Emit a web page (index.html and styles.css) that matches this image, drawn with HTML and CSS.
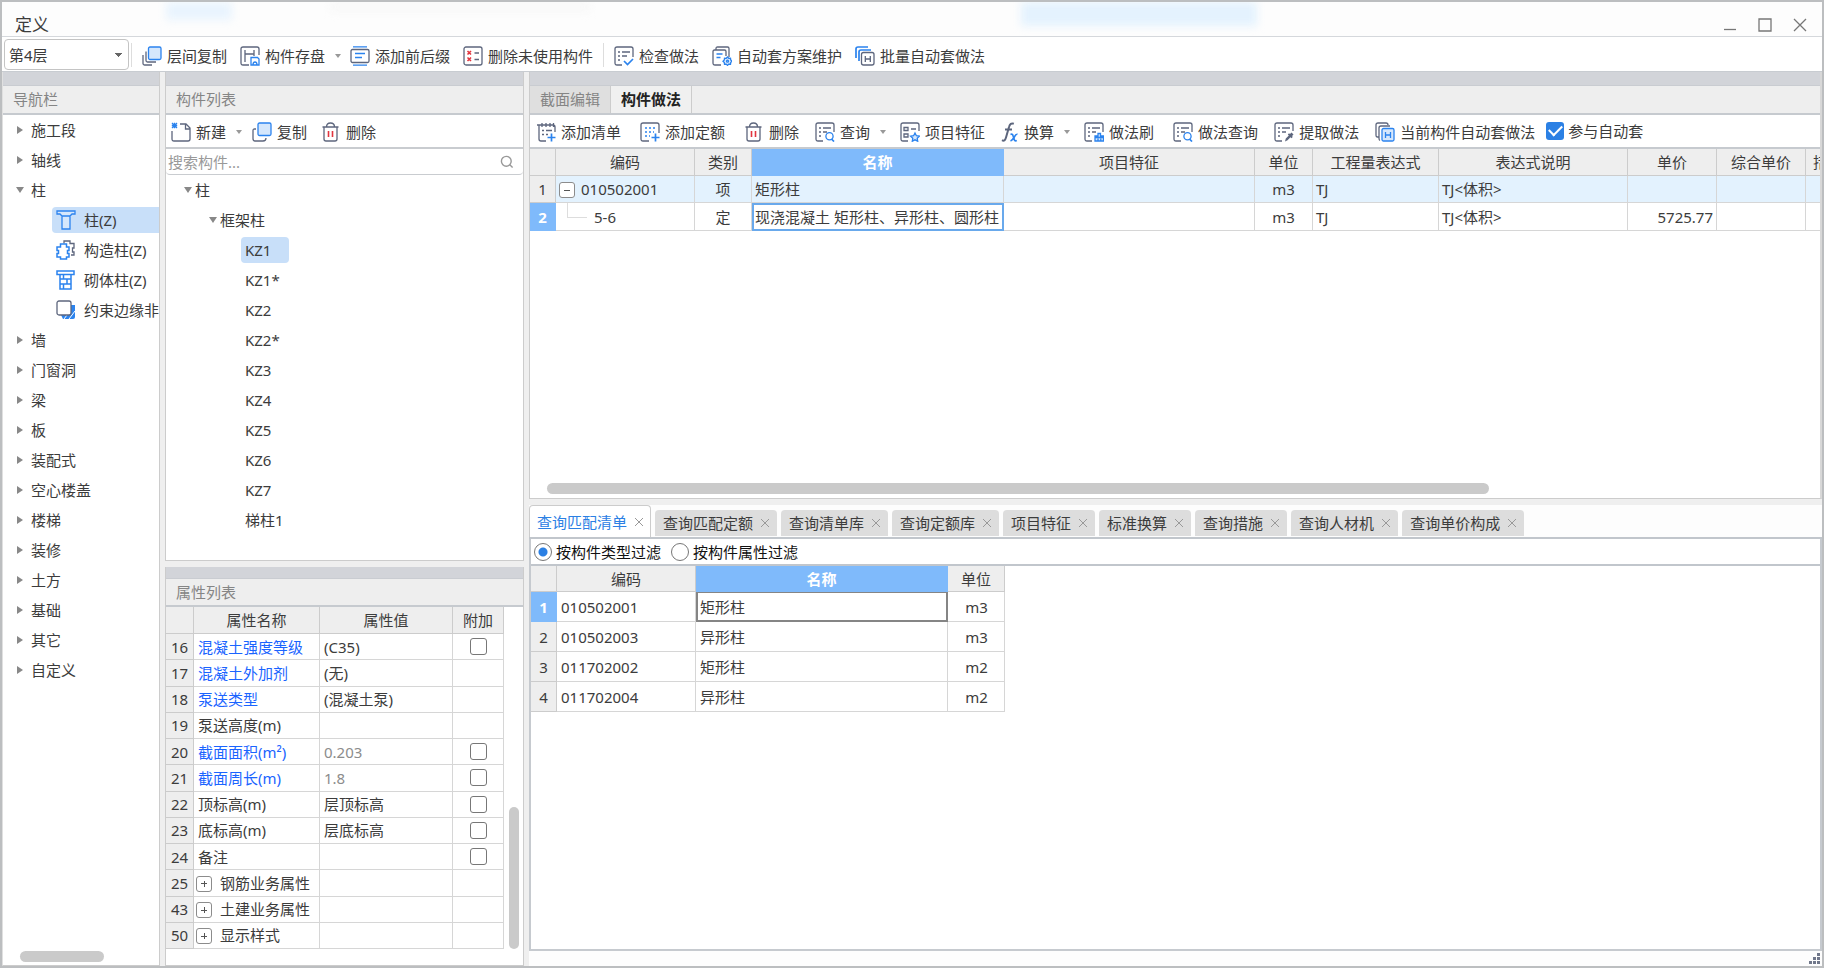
FILE: index.html
```
<!DOCTYPE html>
<html lang="zh-CN">
<head>
<meta charset="utf-8">
<title>定义</title>
<link rel="stylesheet" href="styles.css">
</head>
<body>
<svg class="sprite" aria-hidden="true">
  <symbol id="i-layercopy" viewBox="0 0 20 20"><path class="d" d="M1 9v8.500q0 1.500 1.500 1.500H10M4 5.500v9q0 1.500 1.500 1.500H14"/><rect class="bf" x="6.500" y="1" width="12.500" height="12.500" rx="1.500"/></symbol>
  <symbol id="i-save" viewBox="0 0 20 20"><path class="d" d="M9 19H3q-2 0-2-2V3q0-2 2-2h14q2 0 2 2v6M5 4v12M5 8h9M14 4v6"/><path class="b" d="M11 11.500h6.500l1.500 1.500v6h-8zM13 19q0-3 2-3t2 3"/></symbol>
  <symbol id="i-affix" viewBox="0 0 20 20"><rect class="d" x="1" y="3.500" width="18" height="13" rx="1.500"/><path class="b" d="M3 .8h14M3 19.200h14M5 7.500h10M5 11.500h7"/></symbol>
  <symbol id="i-delunused" viewBox="0 0 20 20"><rect class="d" x="1" y="1" width="18" height="18" rx="2"/><path class="d" d="M11.500 7h4.500M11.500 13.500h4.500"/><path class="r" d="M4.500 5l3.500 3.500M8 5L4.500 8.500M4.500 11.500L8 15M8 11.500L4.500 15"/></symbol>
  <symbol id="i-check" viewBox="0 0 20 20"><path class="d" d="M8 19H3q-2 0-2-2V3q0-2 2-2h14q2 0 2 2v8M4 6h2M8 6h8M4 10h2M8 10h5M4 14h2"/><path class="b2" d="M10 15l3.500 3.500L19 13"/></symbol>
  <symbol id="i-plan" viewBox="0 0 20 20"><path class="d" d="M4 4V2.500Q4 1 5.500 1h10q1.500 0 1.500 1.500V11M9 19H3q-2 0-2-2V5.500Q1 4 2.500 4h10Q14 4 14 5.500V10"/><path class="b" d="M4.500 8h6M4.500 11.500h4"/><path class="bf" d="M15.500 11l1.200 1.300 1.800-.1.200 1.800 1.300 1.200-1.300 1.300-.2 1.700-1.800-.1-1.200 1.300-1.300-1.300-1.700.1-.2-1.700-1.300-1.300 1.300-1.200.2-1.800 1.700.1z"/><circle class="b" cx="15.500" cy="15.200" r="1"/></symbol>
  <symbol id="i-batch" viewBox="0 0 20 20"><path class="b2" d="M1 12V3q0-2 2-2h10M4 15V6q0-2 2-2h10"/><rect class="dw" x="6.500" y="6.500" width="12.500" height="12.500" rx="2"/><path class="d" d="M10.300 10v6M15.300 10v6M10.300 13h5"/></symbol>
  <symbol id="i-new" viewBox="0 0 20 20"><path class="d" d="M9 2h6l4 4v11q0 2-2 2H3q-2 0-2-2V9M14.500 2v5H19"/><path class="b" d="M1 1l5 5M6 1L1 6M3.500 .8v5.400M.8 3.500h5.400"/></symbol>
  <symbol id="i-copy" viewBox="0 0 20 20"><path class="d" d="M4 7H2.500Q1 7 1 8.500v8Q1 19 3 19h8q3 0 3-3"/><rect class="bf" x="6" y="1" width="13" height="12.500" rx="1.500"/></symbol>
  <symbol id="i-trash" viewBox="0 0 20 20"><path class="d" d="M1.500 5h16M3 5v12q0 2 2 2h9q2 0 2-2V5M5.500 5q0-4 4-4t4 4"/><path class="r" d="M7.500 9v6M11.500 9v6"/></symbol>
  <symbol id="i-addlist" viewBox="0 0 20 20"><path class="d" d="M10 19H5q-2 0-2-2V3h-2M3 3h14q2 0 2 2v5M6 1v4M10 1v4M14 1v4M17.500 1v4M6 8.500h2M10 8.500h6M6 12.500h2M10 12.500h2"/><path class="b2" d="M15.500 11.500v8M11.500 15.500h8"/></symbol>
  <symbol id="i-addquota" viewBox="0 0 20 20"><path class="d" d="M9 19H3q-2 0-2-2V3q0-2 2-2h14q2 0 2 2v8"/><path class="bd" d="M5 6h12M5 10h9M5 14h5"/><path class="b2" d="M15.500 11.500v8M11.500 15.500h8"/></symbol>
  <symbol id="i-query" viewBox="0 0 20 20"><path class="d" d="M8 19H3q-2 0-2-2V3q0-2 2-2h14q2 0 2 2v7M4 6h2M8 6h8M4 10h2M8 10h4M4 14h2"/><circle class="b" cx="14.500" cy="14.200" r="3.600"/><path class="b2" d="M16.500 17l2.500 2.500"/></symbol>
  <symbol id="i-feature" viewBox="0 0 20 20"><path class="d" d="M8 19H3q-2 0-2-2V3q0-2 2-2h14q2 0 2 2v6M4 5.500h4v3H4zM4 12h4v3H4zM11 7h5"/><path class="bf" d="M15 11l1.400 2.700 3 .4-2.200 2.100.5 3-2.700-1.400-2.700 1.400.5-3-2.200-2.100 3-.4z"/></symbol>
  <symbol id="i-fx" viewBox="0 0 18 20"><path class="d3" d="M1 18.200q2.800 1.600 4-2.700L8 5q1.200-4.600 4.800-3.200M4 7.500h7"/><path class="b2" d="M9.500 12.500q2-1 2.500 1l1.300 4q.5 2 2.500 1M16.500 12.300q-1.500-.5-3.200 2.700t-3.800 4"/></symbol>
  <symbol id="i-brush" viewBox="0 0 20 20"><path class="d" d="M8 19H3q-2 0-2-2V3q0-2 2-2h14q2 0 2 2v7M4 6h2M8 6h8M4 10h2M8 10h4M4 14h2"/><path class="bf" d="M11 19v-5h3v-2.500h2.500V14h3v5zM14 19v-2.500M16.800 19v-2.500M11 15.500h8"/></symbol>
  <symbol id="i-extract" viewBox="0 0 20 20"><path class="d" d="M8 19H3q-2 0-2-2V3q0-2 2-2h14q2 0 2 2v6M4 6h2M8 6h8M4 10h2M8 10h4M4 14h2"/><path class="df" d="M11 19.500l.8-3 3-3-1-1 1.200-1.200 1 .6 1.500-1.400 2 2-1.400 1.500.6 1-1.200 1.200-1-1-3 3z"/></symbol>
  <symbol id="i-current" viewBox="0 0 20 20"><path class="d" d="M3.500 15H2.500Q1 15 1 13V3q0-2 2-2h8q2 0 2 2M5 18.500q-1-.5-1-2V6q0-2 2-2h9"/><rect class="bf" x="7" y="6.500" width="12" height="12.500" rx="1.500"/><path class="b" d="M10.500 10v6M15.500 10v6M10.500 13h5"/></symbol>
  <symbol id="i-search" viewBox="0 0 20 20"><circle class="g" cx="9" cy="9" r="7"/><path class="g" d="M14 14l4 4"/></symbol>
  <symbol id="i-col" viewBox="0 0 20 20"><path class="bf" d="M1 1h18v3h-3l-2 2H6L4 4H1zM6 6h8v13H6z"/></symbol>
  <symbol id="i-gz" viewBox="0 0 20 20"><path class="d" d="M8 3.500V1h6v2.500h4V8h-1.500v4H18v3h-3"/><path class="bw" d="M4.500 4h6v3H13v3.500h-1.500v3H13V17h-2.500v2h-6v-2H1v-3.500h1.500v-3H1V7h3.500z"/></symbol>
  <symbol id="i-qt" viewBox="0 0 20 20"><path class="bw" d="M1 1h17v3.500H1zM4 4.500h11V19H4zM4 9h11M4 14h11M7.500 4.500V9M11 9v5M7.500 14v5"/></symbol>
  <symbol id="i-ys" viewBox="0 0 20 20"><path class="bb" d="M5 15h10V5h4v12q0 2-2 2H7z"/><path class="w" d="M8 19l3-4M13 19l6-8"/><rect class="dw" x="1" y="1" width="14" height="14" rx="2"/></symbol>
</svg>

<div class="window">
  <header class="titlebar">
    <span class="haze haze-a"></span><span class="haze haze-b"></span><span class="haze haze-c"></span>
    <h1>定义</h1>
    <div class="controls">
      <button type="button" aria-label="最小化"><svg viewBox="0 0 14 14"><path d="M1 11.500h12"/></svg></button>
      <button type="button" aria-label="最大化"><svg viewBox="0 0 14 14"><path d="M1 1h12v12H1z"/></svg></button>
      <button type="button" aria-label="关闭"><svg viewBox="0 0 14 14"><path d="M1 1l12 12M13 1L1 13"/></svg></button>
    </div>
  </header>

  <div class="toolbar main-bar">
    <select class="floor" aria-label="楼层"><option>第4层</option></select>
    <i class="sep"></i>
    <button type="button" class="tool"><svg><use href="#i-layercopy"/></svg>层间复制</button>
    <button type="button" class="tool drop"><svg><use href="#i-save"/></svg>构件存盘</button>
    <button type="button" class="tool"><svg><use href="#i-affix"/></svg>添加前后缀</button>
    <button type="button" class="tool"><svg><use href="#i-delunused"/></svg>删除未使用构件</button>
    <i class="sep sep-mid"></i>
    <button type="button" class="tool"><svg><use href="#i-check"/></svg>检查做法</button>
    <button type="button" class="tool"><svg><use href="#i-plan"/></svg>自动套方案维护</button>
    <button type="button" class="tool"><svg><use href="#i-batch"/></svg>批量自动套做法</button>
  </div>

  <main class="work">
    <nav class="panel nav">
      <div class="band"></div>
      <h2 class="panel-title">导航栏</h2>
      <ul class="tree">
        <li><i class="arrow"></i>施工段</li>
        <li><i class="arrow"></i>轴线</li>
        <li><i class="arrow open"></i>柱</li>
        <li class="leaf active"><a href="#"><svg><use href="#i-col"/></svg>柱(Z)</a></li>
        <li class="leaf"><a href="#"><svg><use href="#i-gz"/></svg>构造柱(Z)</a></li>
        <li class="leaf"><a href="#"><svg><use href="#i-qt"/></svg>砌体柱(Z)</a></li>
        <li class="leaf"><a href="#"><svg><use href="#i-ys"/></svg>约束边缘非</a></li>
        <li><i class="arrow"></i>墙</li>
        <li><i class="arrow"></i>门窗洞</li>
        <li><i class="arrow"></i>梁</li>
        <li><i class="arrow"></i>板</li>
        <li><i class="arrow"></i>装配式</li>
        <li><i class="arrow"></i>空心楼盖</li>
        <li><i class="arrow"></i>楼梯</li>
        <li><i class="arrow"></i>装修</li>
        <li><i class="arrow"></i>土方</li>
        <li><i class="arrow"></i>基础</li>
        <li><i class="arrow"></i>其它</li>
        <li><i class="arrow"></i>自定义</li>
      </ul>
      <div class="hscroll nav-scroll"></div>
    </nav>

    <div class="middle">
      <section class="panel parts">
        <div class="band"></div>
        <h2 class="panel-title">构件列表</h2>
        <div class="toolbar part-bar">
          <button type="button" class="tool drop"><svg><use href="#i-new"/></svg>新建</button>
          <button type="button" class="tool"><svg><use href="#i-copy"/></svg>复制</button>
          <button type="button" class="tool"><svg><use href="#i-trash"/></svg>删除</button>
        </div>
        <label class="search"><input type="text" placeholder="搜索构件..." aria-label="搜索构件"><svg><use href="#i-search"/></svg></label>
        <ul class="tree part-tree">
          <li><i class="arrow open"></i>柱</li>
          <li class="lv2"><i class="arrow open"></i>框架柱</li>
          <li class="lv3 active"><a href="#">KZ1</a></li>
          <li class="lv3"><a href="#">KZ1*</a></li>
          <li class="lv3"><a href="#">KZ2</a></li>
          <li class="lv3"><a href="#">KZ2*</a></li>
          <li class="lv3"><a href="#">KZ3</a></li>
          <li class="lv3"><a href="#">KZ4</a></li>
          <li class="lv3"><a href="#">KZ5</a></li>
          <li class="lv3"><a href="#">KZ6</a></li>
          <li class="lv3"><a href="#">KZ7</a></li>
          <li class="lv3"><a href="#">梯柱1</a></li>
        </ul>
      </section>

      <section class="panel props">
        <div class="band"></div>
        <h2 class="panel-title">属性列表</h2>
        <div class="props-body">
          <table class="grid prop-grid">
            <colgroup><col class="c28"><col class="c126"><col class="c133"><col class="c51"></colgroup>
            <thead><tr><th></th><th>属性名称</th><th>属性值</th><th>附加</th></tr></thead>
            <tbody>
              <tr><th>16</th><td class="link">混凝土强度等级</td><td>(C35)</td><td class="mid"><input type="checkbox" aria-label="附加 混凝土强度等级"></td></tr>
              <tr><th>17</th><td class="link">混凝土外加剂</td><td>(无)</td><td></td></tr>
              <tr><th>18</th><td class="link">泵送类型</td><td>(混凝土泵)</td><td></td></tr>
              <tr><th>19</th><td>泵送高度(m)</td><td></td><td></td></tr>
              <tr><th>20</th><td class="link">截面面积(m²)</td><td class="dim">0.203</td><td class="mid"><input type="checkbox" aria-label="附加 截面面积"></td></tr>
              <tr><th>21</th><td class="link">截面周长(m)</td><td class="dim">1.8</td><td class="mid"><input type="checkbox" aria-label="附加 截面周长"></td></tr>
              <tr><th>22</th><td>顶标高(m)</td><td>层顶标高</td><td class="mid"><input type="checkbox" aria-label="附加 顶标高"></td></tr>
              <tr><th>23</th><td>底标高(m)</td><td>层底标高</td><td class="mid"><input type="checkbox" aria-label="附加 底标高"></td></tr>
              <tr><th>24</th><td>备注</td><td></td><td class="mid"><input type="checkbox" aria-label="附加 备注"></td></tr>
              <tr><th>25</th><td class="group"><button type="button" class="fold plus" aria-label="展开"></button>钢筋业务属性</td><td></td><td></td></tr>
              <tr><th>43</th><td class="group"><button type="button" class="fold plus" aria-label="展开"></button>土建业务属性</td><td></td><td></td></tr>
              <tr><th>50</th><td class="group"><button type="button" class="fold plus" aria-label="展开"></button>显示样式</td><td></td><td></td></tr>
            </tbody>
          </table>
          <div class="vscroll"></div>
        </div>
      </section>
    </div>

    <div class="right">
      <section class="panel method">
        <div class="band"></div>
        <div class="panel-title page-tabs">
          <button type="button">截面编辑</button><button type="button" class="on">构件做法</button>
        </div>
        <div class="toolbar method-bar">
          <button type="button" class="tool wide"><svg><use href="#i-addlist"/></svg>添加清单</button>
          <button type="button" class="tool wide"><svg><use href="#i-addquota"/></svg>添加定额</button>
          <button type="button" class="tool"><svg><use href="#i-trash"/></svg>删除</button>
          <button type="button" class="tool drop"><svg><use href="#i-query"/></svg>查询</button>
          <button type="button" class="tool"><svg><use href="#i-feature"/></svg>项目特征</button>
          <button type="button" class="tool drop"><svg class="fx"><use href="#i-fx"/></svg>换算</button>
          <button type="button" class="tool wide"><svg><use href="#i-brush"/></svg>做法刷</button>
          <button type="button" class="tool"><svg><use href="#i-query"/></svg>做法查询</button>
          <button type="button" class="tool"><svg><use href="#i-extract"/></svg>提取做法</button>
          <button type="button" class="tool"><svg><use href="#i-current"/></svg>当前构件自动套做法</button>
          <label class="join"><input type="checkbox" checked>参与自动套</label>
        </div>
        <div class="grid-wrap">
          <table class="grid method-grid">
            <colgroup><col class="c26"><col class="c139"><col class="c57"><col class="c252"><col class="c251"><col class="c58"><col class="c126"><col class="c189"><col class="c89"><col class="c89"><col class="c58"></colgroup>
            <thead><tr><th></th><th>编码</th><th>类别</th><th class="sel">名称</th><th>项目特征</th><th>单位</th><th>工程量表达式</th><th>表达式说明</th><th>单价</th><th>综合单价</th><th class="cut">措</th></tr></thead>
            <tbody>
              <tr class="tint"><th>1</th><td class="code"><button type="button" class="fold" aria-label="折叠"></button>010502001</td><td class="mid">项</td><td>矩形柱</td><td></td><td class="mid">m3</td><td>TJ</td><td>TJ&lt;体积&gt;</td><td></td><td></td><td></td></tr>
              <tr><th class="sel">2</th><td class="child">5-6</td><td class="mid">定</td><td class="focus">现浇混凝土 矩形柱、异形柱、圆形柱</td><td></td><td class="mid">m3</td><td>TJ</td><td>TJ&lt;体积&gt;</td><td class="num">5725.77</td><td></td><td></td></tr>
            </tbody>
          </table>
        </div>
        <div class="hscroll method-scroll"></div>
      </section>

      <section class="lookup">
        <div class="tabs">
          <button type="button" class="on">查询匹配清单<i></i></button>
          <button type="button">查询匹配定额<i></i></button>
          <button type="button">查询清单库<i></i></button>
          <button type="button">查询定额库<i></i></button>
          <button type="button">项目特征<i></i></button>
          <button type="button">标准换算<i></i></button>
          <button type="button">查询措施<i></i></button>
          <button type="button">查询人材机<i></i></button>
          <button type="button">查询单价构成<i></i></button>
        </div>
        <div class="lookup-body">
          <div class="filters">
            <label><input type="radio" name="filter" checked>按构件类型过滤</label>
            <label><input type="radio" name="filter">按构件属性过滤</label>
          </div>
          <table class="grid lookup-grid">
            <colgroup><col class="c26"><col class="c139"><col class="c252"><col class="c57"></colgroup>
            <thead><tr><th></th><th>编码</th><th class="sel">名称</th><th>单位</th></tr></thead>
            <tbody>
              <tr><th class="sel">1</th><td>010502001</td><td class="picked">矩形柱</td><td class="mid">m3</td></tr>
              <tr><th>2</th><td>010502003</td><td>异形柱</td><td class="mid">m3</td></tr>
              <tr><th>3</th><td>011702002</td><td>矩形柱</td><td class="mid">m2</td></tr>
              <tr><th>4</th><td>011702004</td><td>异形柱</td><td class="mid">m2</td></tr>
            </tbody>
          </table>
        </div>
        <div class="status"><svg viewBox="0 0 12 12"><path d="M9 0h3v3H9zM5 4h3v3H5zM9 4h3v3H9zM1 8h3v3H1zM5 8h3v3H5zM9 8h3v3H9z"/></svg></div>
      </section>
    </div>
  </main>
</div>
</body>
</html>
```
FILE: styles.css
```
* { box-sizing: border-box; }

body {
  margin: 0;
  font: 15px/20px "Noto Sans", "Noto Sans CJK SC", sans-serif;
  color: #3c3c3c;
}

button, input, select { font: inherit; color: inherit; }
button { margin: 0; padding: 0; border: 0; background: none; white-space: nowrap; }
a { color: inherit; text-decoration: none; }
h1, h2, ul { margin: 0; padding: 0; font-weight: 400; list-style: none; }

/* icon strokes */
.sprite { position: absolute; width: 0; height: 0; }
.d, .d3, .dw, .b, .b2, .bd, .bf, .bw, .r, .g, .w { fill: none; stroke-width: 1.3; }
.d, .dw, .d3 { stroke: #5d667d; }
.d3 { stroke-width: 2; }
.dw { fill: #fff; }
.df { fill: #5d667d; }
.b, .b2, .bd, .bf, .bw { stroke: #2b83ee; }
.b2 { stroke-width: 1.7; }
.bd { stroke-width: 1.6; stroke-dasharray: 2 2; }
.bf { fill: #d5e7fc; }
.bw { fill: #fff; stroke-width: 1.5; }
.bb { fill: #2b83ee; }
.w { stroke: #fff; stroke-width: 1; }
.r { stroke: #e2353f; stroke-width: 1.6; }
.g { stroke: #999; stroke-width: 2; }

.window {
  display: flex;
  flex-direction: column;
  height: 100vh;
  min-height: 700px;
  border: 2px solid #bcbec0;
  background: #fff;
}

.titlebar {
  position: relative;
  display: flex;
  align-items: center;
  justify-content: space-between;
  height: 35px;
  padding: 11px 15px 0 13px;
  border-bottom: 1px solid #d5d8dc;
  background: #fdfdfd;
  overflow: hidden;
  flex: none;
}
.titlebar h1 { position: relative; font-size: 17px; line-height: 24px; }
.haze { position: absolute; top: 0; height: 18px; filter: blur(4px); background: #e9f4fe; }
.haze-a { left: 9%; width: 66px; }
.haze-b { left: 56%; width: 236px; height: 24px; background: #e4f2fe; }
.haze-c { left: 18%; width: 260px; height: 10px; background: #f8f8f8; }
.controls { position: relative; display: flex; gap: 21px; }
.controls button { display: flex; }
.controls svg { width: 14px; height: 14px; fill: none; stroke: #777; stroke-width: 1.3; }

.toolbar { display: flex; align-items: center; gap: 13px; background: #fff; }
.main-bar { height: 35px; padding: 1px 2px 0; border-bottom: 1px solid #c8ccd1; flex: none; }
.main-bar .tool { padding-top: 2px; }
.floor {
  width: 125px;
  height: 31px;
  margin-right: -11px;
  padding: 0 4px;
  border: 1px solid #c4c4c4;
  border-radius: 4px;
  appearance: none;
  background: linear-gradient(#666, #666) no-repeat 110px 13px / 7px 1px,
              linear-gradient(#666, #666) no-repeat 111px 14px / 5px 1px,
              linear-gradient(#666, #666) no-repeat 112px 15px / 3px 1px,
              linear-gradient(#666, #666) no-repeat 113px 16px / 1px 1px, #fff;
}
.sep { width: 1px; height: 24px; margin-right: -3px; background: #ddd; }
.sep-mid { margin: 0 -3px; }

.tool { display: flex; align-items: center; gap: 5px; flex: none; }
.tool svg { width: 20px; height: 20px; }
.tool .fx { width: 18px; }
.tool.drop::after {
  content: "";
  margin: 0 -4px 0 5px;
  border: 3px solid transparent;
  border-top: 4px solid #999;
  border-bottom: 0;
}

.work {
  flex: 1;
  min-height: 0;
  display: grid;
  grid-template-columns: 158px 359px minmax(0, 1fr);
  gap: 5px;
  background: #efefef;
}
.panel { border: 1px solid #ccc; border-top: 0; background: #fff; min-width: 0; }
.band { height: 14px; background: #d2d4d9; border-bottom: 1px solid #c9ccd1; flex: none; }
.panel-title {
  height: 29px;
  padding: 3px 10px;
  font-size: 15px;
  border-bottom: 2px solid #c6cacf;
  background: #eee;
  color: #858585;
  flex: none;
}

.nav { display: flex; flex-direction: column; border-left-color: #e0e0e0; overflow: hidden; }
.tree { flex: 1; min-height: 0; white-space: nowrap; }
.tree li { display: flex; align-items: center; gap: 7px; height: 30px; padding-left: 12px; }
.arrow { display: flex; justify-content: center; width: 9px; }
.arrow::before { content: ""; border: 4px solid transparent; border-left: 6px solid #888; border-right: 0; }
.arrow.open::before { border: 4px solid transparent; border-top: 6px solid #888; border-bottom: 0; }
.leaf a { display: flex; align-items: center; gap: 8px; width: 100%; height: 26px; padding-left: 4px; border-radius: 4px 0 0 4px; }
.tree .leaf { padding-left: 49px; }
.leaf svg { width: 20px; height: 20px; flex: none; }
.active a { background: #c8dff9; }
.hscroll { height: 11px; border-radius: 6px; background: #cacaca; }
.nav-scroll { width: 84px; margin: 0 0 3px 17px; }

.middle { display: flex; flex-direction: column; gap: 6px; min-height: 0; }
.parts { height: 489px; display: flex; flex-direction: column; overflow: hidden; }
.part-bar { height: 34px; padding: 2px 5px 0; border-bottom: 2px solid #c9ccd0; gap: 14px; flex: none; }
.search { display: flex; align-items: center; height: 26px; padding: 0 9px 0 2px; border-bottom: 1px solid #c9ccd0; border-radius: 4px; flex: none; }
.search input { flex: 1; min-width: 0; padding: 0; border: 0; outline: 0; background: none; }
.search input::placeholder { color: #999; }
.search svg { width: 14px; height: 14px; }
.part-tree li { gap: 3px; padding-left: 17px; }
.part-tree .lv2 { padding-left: 42px; }
.part-tree .lv3 { padding-left: 75px; }
.lv3 a { height: 26px; padding: 3px 4px; border-radius: 4px; }
.lv3.active a { width: 48px; }

.props { flex: 1; min-height: 0; display: flex; flex-direction: column; }
.props .band { height: 12px; }
.props .panel-title { height: 28px; }
.props-body { flex: 1; min-height: 0; display: flex; justify-content: space-between; padding: 0 4px 16px 0; }
.vscroll { align-self: flex-end; width: 10px; height: 142px; border-radius: 5px; background: #cacaca; }

.grid { table-layout: fixed; border-collapse: separate; border-spacing: 0; }
.grid th, .grid td {
  padding: 0 3px;
  border-right: 1px solid #d6d6d6;
  border-bottom: 1px solid #d6d6d6;
  font-weight: 400;
  text-align: left;
  white-space: nowrap;
  overflow: hidden;
}
.grid th { background: #eee; border-color: #ccc; text-align: center; }
.grid th.sel { background: #7fbafb; border-color: #7fbafb; color: #fff; font-weight: 700; }
.grid .mid { text-align: center; }
.grid .num { text-align: right; }
.grid th.cut { text-align: left; padding-left: 7px; }
.c26 { width: 26px; } .c28 { width: 28px; } .c51 { width: 51px; } .c57 { width: 57px; }
.c58 { width: 58px; } .c89 { width: 89px; } .c126 { width: 126px; } .c133 { width: 133px; }
.c139 { width: 139px; } .c189 { width: 189px; } .c251 { width: 251px; } .c252 { width: 252px; }

.prop-grid { width: 338px; height: 100%; }
.prop-grid thead th { height: 27px; }
.prop-grid td { padding-left: 4px; }
.grid .link { color: #1a64ff; }
.grid .dim { color: #8c8c8c; }
.prop-grid input {
  display: block;
  width: 17px;
  height: 17px;
  margin: 0 auto;
  border: 1px solid #777;
  border-radius: 3px;
  appearance: none;
  background: #fff;
}
.fold {
  display: inline-block;
  width: 16px;
  height: 16px;
  vertical-align: -2px;
  border: 1px solid #8c8c8c;
  border-radius: 3px;
  background: linear-gradient(#555, #555) no-repeat center / 6px 1px, #fff;
}
.fold.plus { background: linear-gradient(#555, #555) no-repeat center / 6px 1px, linear-gradient(#555, #555) no-repeat center / 1px 6px, #fff; }
.prop-grid .group { padding-left: 2px; }
.group .fold { margin-right: 8px; }

.right { display: flex; flex-direction: column; min-width: 0; min-height: 0; }
.method { height: 427px; display: flex; flex-direction: column; overflow: hidden; border-right: 2px solid #d8d8d8; flex: none; }
.page-tabs { display: flex; padding: 0; }
.page-tabs button { width: 81px; padding-bottom: 2px; border-right: 1px solid #ccc; background: #dfdfdf; }
.page-tabs .on { background: #f0f0f0; color: #222; font-weight: 700; }
.method-bar { height: 34px; padding: 2px 6px 0; border-bottom: 2px solid #c6cacf; gap: 16px; flex: none; }
.method-bar .wide { margin-right: 3px; }
.method-bar .tool.drop::after { margin-right: -2px; }
.join { display: flex; align-items: center; gap: 4px; margin-left: -5px; padding-bottom: 3px; white-space: nowrap; }
.join input {
  width: 18px;
  height: 18px;
  margin: 0;
  border-radius: 3px;
  appearance: none;
  background: #2b80e4;
  display: grid;
  place-items: center;
}
.join input::before { content: ""; width: 11px; height: 6px; border: solid #fff; border-width: 0 0 2px 2px; transform: translateY(-2px) rotate(-45deg); }
.grid-wrap { flex: 1; min-height: 0; overflow: hidden; }
.method-grid { width: 1334px; }
.method-grid thead th { height: 27px; }
.method-grid tbody th, .method-grid td { height: 27px; }
.method-grid tbody tr:last-child > * { height: 28px; }
.tint td { background: #e3f2fe; }
.grid .focus { border: 2px solid #69a9ec; padding: 0 1px; }
.code .fold { margin-right: 6px; }
.grid .child {
  padding-left: 38px;
  background: linear-gradient(#ddd, #ddd) no-repeat 11px 0 / 1px 14px, linear-gradient(#ddd, #ddd) no-repeat 11px 14px / 20px 1px;
}
.method-scroll { width: 73%; margin: 0 0 4px 17px; }

.lookup { flex: 1; min-height: 0; display: flex; flex-direction: column; margin-top: 6px; background: #fdfdfd; }
.tabs { display: flex; align-items: flex-end; gap: 4px; height: 34px; border-bottom: 2px solid #c1c6cc; flex: none; }
.tabs button { display: flex; align-items: center; gap: 8px; height: 26px; margin-bottom: 1px; padding: 0 8px; border-radius: 4px 4px 0 0; background: #ddd; }
.tabs .on { height: 32px; margin: 0; padding: 0 7px; border: 1px solid #ccc; border-bottom: 0; background: #fff; color: #2b80e4; }
.tabs i {
  width: 8px;
  height: 8px;
  background: linear-gradient(45deg, transparent 46%, #999 46% 54%, transparent 54%),
              linear-gradient(-45deg, transparent 46%, #999 46% 54%, transparent 54%);
}
.lookup-body { flex: 1; min-height: 0; border: 2px solid #c6cacf; border-top: 0; background: #fff; }
.filters { display: flex; align-items: center; gap: 10px; height: 27px; padding: 0 3px; border-bottom: 2px solid #c1c6cc; color: #111; }
.filters label { display: flex; align-items: center; gap: 4px; }
.filters input {
  width: 18px;
  height: 18px;
  margin: 0;
  border: 1px solid #777;
  border-radius: 50%;
  appearance: none;
  background: #fff;
}
.filters input:checked { background: radial-gradient(circle, #2b80e4 4px, #fff 5px); }
.lookup-grid { width: 474px; }
.lookup-grid thead th { height: 26px; }
.lookup-grid tbody th, .lookup-grid td { height: 30px; }
.lookup-grid td { padding-left: 4px; }
.grid .picked { border: 2px solid #858585; border-top-width: 1px; padding-left: 2px; }
.status { display: flex; justify-content: flex-end; height: 15px; padding: 2px; flex: none; }
.status svg { width: 12px; height: 12px; fill: #70778a; }
```
